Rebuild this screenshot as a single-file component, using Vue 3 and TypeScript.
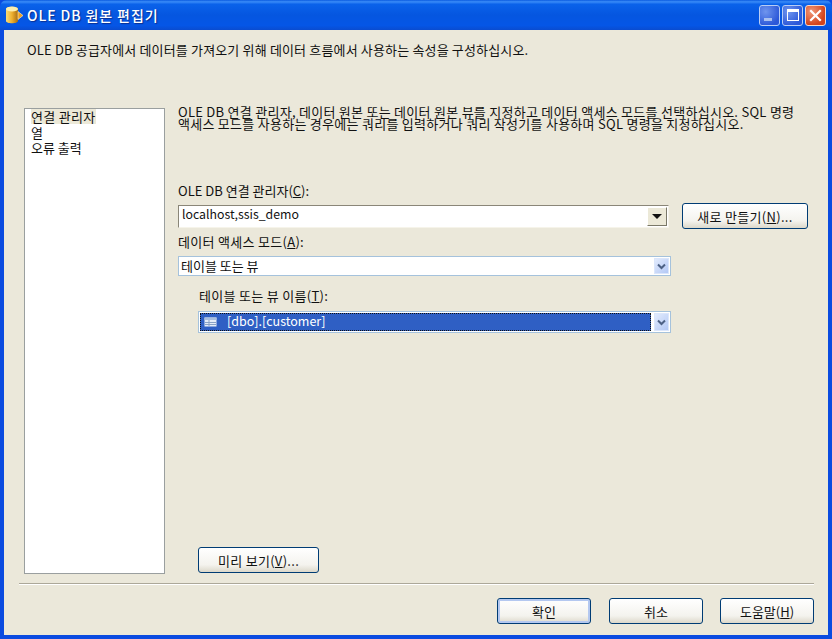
<script setup lang="ts">
const sections: string[] = ['연결 관리자', '열', '오류 출력']
</script>

<template>
  <div class="window">
    <header class="titlebar">
      <svg class="app-icon" width="20" height="20" viewBox="0 0 20 20">
        <defs>
          <linearGradient id="cyl" x1="0" x2="1" y1="0" y2="0">
            <stop offset="0" stop-color="#f8dc78" />
            <stop offset="0.5" stop-color="#eeb030" />
            <stop offset="1" stop-color="#a86c10" />
          </linearGradient>
        </defs>
        <path d="M1 4 C1 1 13 1 13 4 V16 C13 19 1 19 1 16 Z" fill="url(#cyl)" />
        <ellipse cx="7" cy="4" rx="6" ry="2.4" fill="#fbeeb0" />
        <path d="M13 6.5 L18 10.5 L13 14.5 Z" fill="#f0a020" stroke="#fff3c0" stroke-width="0.6" />
      </svg>
      <span class="title">OLE DB 원본 편집기</span>
      <div class="controls">
        <div class="ctl ctl-blue"><span class="min-glyph"></span></div>
        <div class="ctl ctl-blue"><span class="max-glyph"></span></div>
        <div class="ctl ctl-red">
          <svg width="13" height="13" viewBox="0 0 13 13"><path d="M2 2 L11 11 M11 2 L2 11" stroke="#fff" stroke-width="2.2" stroke-linecap="square" /></svg>
        </div>
      </div>
    </header>

    <div class="client">
      <p class="intro">OLE DB 공급자에서 데이터를 가져오기 위해 데이터 흐름에서 사용하는 속성을 구성하십시오.</p>

      <div class="main">
        <ul class="nav">
          <li v-for="(s, i) in sections" :key="s"><span :class="{ current: i === 0 }">{{ s }}</span></li>
        </ul>

        <section class="pane">
          <p class="desc">OLE DB 연결 관리자, 데이터 원본 또는 데이터 원본 뷰를 지정하고 데이터 액세스 모드를 선택하십시오. SQL 명령<br />액세스 모드를 사용하는 경우에는 쿼리를 입력하거나 쿼리 작성기를 사용하며 SQL 명령을 지정하십시오.</p>

          <label class="lbl lbl-first">OLE DB 연결 관리자(<u>C</u>):</label>
          <div class="row">
            <div class="classic-combo">
              <span class="value">localhost,ssis_demo</span>
              <span class="classic-btn"><i></i></span>
            </div>
            <button class="btn new-btn">새로 만들기(<u>N</u>)...</button>
          </div>

          <label class="lbl lbl-second">데이터 액세스 모드(<u>A</u>):</label>
          <div class="xp-combo mode">
            <span class="value">테이블 또는 뷰</span>
            <span class="xp-btn">
              <svg width="9" height="7" viewBox="0 0 9 7"><path d="M1 1.5 L4.5 5 L8 1.5" fill="none" stroke="#4d6185" stroke-width="2" /></svg>
            </span>
          </div>

          <div class="sub">
            <label class="lbl">테이블 또는 뷰 이름(<u>T</u>):</label>
            <div class="xp-combo table">
              <span class="selected">
                <svg class="tbl-icon" width="13" height="10" viewBox="0 0 13 10">
                  <rect x="0.5" y="0.5" width="12" height="9" fill="#e6edf8" />
                  <rect x="0.5" y="0.5" width="12" height="2.5" fill="#a9bfe0" />
                  <path d="M1 5.5 H12 M1 7.5 H12 M5 3 V9" stroke="#8aa2c6" />
                </svg>
                <span class="sel-text">[dbo].[customer]</span>
              </span>
              <span class="xp-btn">
                <svg width="9" height="7" viewBox="0 0 9 7"><path d="M1 1.5 L4.5 5 L8 1.5" fill="none" stroke="#4d6185" stroke-width="2" /></svg>
              </span>
            </div>
            <div class="spacer"></div>
            <button class="btn preview">미리 보기(<u>V</u>)...</button>
          </div>
        </section>
      </div>

      <div class="rule"></div>

      <footer class="actions">
        <button class="btn act default">확인</button>
        <button class="btn act">취소</button>
        <button class="btn act">도움말(<u>H</u>)</button>
      </footer>
    </div>
  </div>
</template>

<style>
html, body { margin: 0; padding: 0; background: #0831d9; }
</style>

<style scoped>
* { box-sizing: border-box; }
.window {
  width: 832px;
  height: 639px;
  display: flex;
  flex-direction: column;
  background: #0a4be0;
  font-family: "Noto Sans CJK KR", "DejaVu Sans", sans-serif;
  font-size: 13px;
  color: #111;
  overflow: hidden;
}
.titlebar {
  height: 30px;
  flex: none;
  display: flex;
  align-items: center;
  padding: 0 6px 0 5px;
  border-radius: 7px 7px 0 0;
  background: linear-gradient(180deg, #0a5be0 0%, #3a8cf8 6%, #0a62ea 14%, #0556e0 50%, #0556e6 85%, #0a4cd0 100%);
}
.app-icon { flex: none; margin-right: 2px; }
.title {
  color: #fff;
  font-size: 14px;
  font-weight: 500;
  letter-spacing: 0.9px;
  text-shadow: 1px 1px 1px #0a2f90;
}
.controls { margin-left: auto; display: flex; gap: 2px; }
.ctl {
  width: 21px;
  height: 21px;
  border: 1px solid #fff;
  border-radius: 3px;
  display: flex;
  align-items: center;
  justify-content: center;
}
.ctl-blue { background: radial-gradient(circle at 30% 30%, #6f95ee, #2c58d8 75%); border-color: #b8cdf5; }
.ctl-red { background: radial-gradient(circle at 30% 30%, #f09878, #d4441c 70%); border-color: #f4d8cc; }
.min-glyph { width: 8px; height: 3px; background: #a9c0f0; margin-top: 9px; margin-right: 3px; }
.max-glyph { width: 12px; height: 12px; border: 1px solid #fff; border-top-width: 3px; }

.client {
  flex: 1;
  margin: 0 4px 4px;
  padding: 0 14px 0 15px;
  background: #ebe8da;
  display: flex;
  flex-direction: column;
  min-height: 0;
}
.intro { margin: 12px 0 0 8px; height: 16px; line-height: 16px; white-space: nowrap; letter-spacing: 0.16px; }

.main { flex: none; height: 466px; margin-top: 50px; display: flex; padding-left: 5px; }
.nav {
  list-style: none;
  margin: 0;
  padding: 0 0 0 6px;
  width: 141px;
  flex: none;
  background: #fff;
  border: 1px solid #9a9f9f;
}
.nav li { height: 15.5px; line-height: 15.5px; white-space: nowrap; }
.nav .current { background: #ece9d8; display: inline-block; height: 15px; line-height: 15px; letter-spacing: 0.3px; }

.pane { flex: 1; margin-left: 13px; display: flex; flex-direction: column; min-width: 0; }
.desc { margin: -2px 0 0; height: 25px; line-height: 12px; white-space: nowrap; letter-spacing: 0.27px; }
.lbl { display: block; height: 16px; line-height: 16px; white-space: nowrap; }
.lbl-first { margin-top: 52px; }
.lbl-second { margin-top: 5px; letter-spacing: 0.3px; }
.row { display: flex; align-items: center; margin-top: 4px; height: 26px; }
.classic-combo {
  width: 491px;
  height: 23px;
  background: #fff;
  border: 1px solid;
  border-color: #8a8678 #f6f4ea #f6f4ea #8a8678;
  display: flex;
  align-items: center;
  justify-content: space-between;
  padding: 0 1px 0 3px;
}
.classic-combo .value { font-size: 12.3px; line-height: 16px; margin-top: -4px; }
.classic-btn {
  width: 20px;
  height: 19px;
  background: #ece9d8;
  border: 1px solid;
  border-color: #fff #7a7868 #7a7868 #fff;
  display: flex;
  align-items: center;
  justify-content: center;
}
.classic-btn i { border-style: solid; border-width: 5px 5px 0; border-color: #111 transparent transparent; }
.value { white-space: nowrap; }
.btn {
  font: inherit;
  color: #111;
  border: 1px solid #003c74;
  border-radius: 3px;
  background: linear-gradient(180deg, #ffffff 0%, #f4f3ee 70%, #dcd8ca 100%);
  padding: 0;
  white-space: nowrap;
}
.new-btn { width: 126px; height: 26px; margin-left: 13px; letter-spacing: 0.3px; }

.xp-combo {
  height: 20px;
  width: 493px;
  background: #fff;
  border: 1px solid #a5c2dc;
  display: flex;
  align-items: stretch;
  justify-content: space-between;
  padding: 1px;
}
.mode .value { padding-left: 1px; line-height: 16px; }
.xp-btn {
  width: 15px;
  flex: none;
  border: 1px solid #dbe6fb;
  background: linear-gradient(135deg, #e2ebfd, #b3c8f5);
  display: flex;
  align-items: center;
  justify-content: center;
}
.mode { margin-top: 6px; }
.sub { flex: 1; display: flex; flex-direction: column; padding-left: 21px; padding-top: 12px; min-height: 0; }
.sub .lbl { letter-spacing: 0.3px; }
.sub .xp-combo { width: 473px; height: 22px; margin-top: 7px; margin-left: -1px; }
.selected {
  flex: 1;
  margin-right: 3px;
  background: #2f5fc4;
  outline: 1px dotted #111;
  outline-offset: -1px;
  color: #fff;
  display: flex;
  align-items: center;
  padding-left: 4px;
  gap: 10px;
  font-size: 12.5px;
}
.sel-text { line-height: 16px; margin-top: -3px; }
.spacer { flex: 1; }
.preview { width: 121px; height: 26px; margin-left: -1px; margin-bottom: 1px; letter-spacing: 0.3px; }

.rule { height: 2px; margin-top: 9px; border-top: 1px solid #aca899; border-bottom: 1px solid #fff; flex: none; }
.actions { display: flex; justify-content: flex-end; gap: 18px; margin-top: 13px; }
.act { width: 94px; height: 26px; }
.act:last-child { margin-left: -1px; }
.default { box-shadow: inset 0 0 0 2px #b4c8f0; }
</style>
